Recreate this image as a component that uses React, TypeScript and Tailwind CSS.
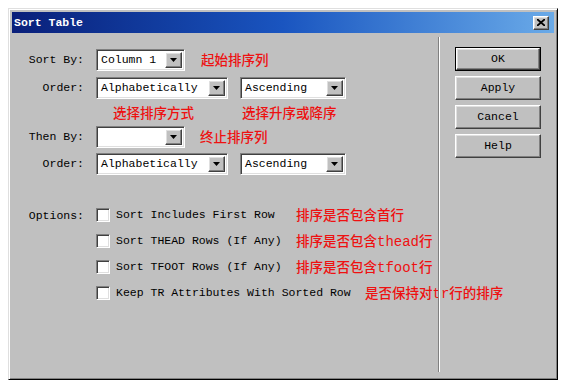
import React from "react";

const mono = "font-['Liberation_Mono','Noto_Sans_CJK_SC',monospace]";
const cjk = "font-['Noto_Sans_CJK_SC',sans-serif]";

const raised =
  "border border-t-white border-l-white border-r-[#404040] border-b-[#404040] shadow-[inset_-1px_-1px_0_#808080,inset_1px_1px_0_#dfdfdf] bg-[#c0c0c0]";
const sunken =
  "border border-t-[#808080] border-l-[#808080] border-r-white border-b-white shadow-[inset_1px_1px_0_#404040,inset_-1px_-1px_0_#dfdfdf]";

const Select = ({ value, w }: { value: string; w: string }) => (
  <div className={`${sunken} ${w} flex h-[22px] shrink-0 items-center bg-white p-[2px]`}>
    <span className={`${mono} flex-1 pl-[2px] text-[11.5px] leading-none text-black`}>
      {value}
    </span>
    <div className={`${raised} flex h-[16px] w-[17px] items-center justify-center`}>
      <svg width="7" height="4" viewBox="0 0 7 4">
        <path d="M0 0h7L3.5 4z" fill="#000" />
      </svg>
    </div>
  </div>
);

const Label = ({ children }: { children: React.ReactNode }) => (
  <div className={`${mono} w-[72px] shrink-0 text-right text-[11.5px] text-black`}>
    {children}
  </div>
);

const Red = ({ children, className = "" }: { children: React.ReactNode; className?: string }) => (
  <span
    className={`${cjk} shrink-0 whitespace-nowrap text-[13.5px] font-medium leading-none text-[#ee1111] ${className}`}
  >
    {children}
  </span>
);

const Check = ({ label, w, note }: { label: string; w: string; note: React.ReactNode }) => (
  <div className="flex h-[26px] items-center whitespace-nowrap">
    <div className="w-[84px] shrink-0" />
    <div className={`${sunken} h-[14px] w-[14px] shrink-0 bg-white`} />
    <span className={`${mono} ${w} shrink-0 pl-[6px] text-[11.5px] text-black`}>{label}</span>
    <Red>{note}</Red>
  </div>
);

const Btn = ({ children, def }: { children: string; def?: boolean }) => (
  <div className={def ? "border border-black" : ""}>
    <div
      className={`${raised} ${mono} flex items-center justify-center text-[11.5px] text-black ${
        def ? "h-[22px]" : "h-[24px]"
      }`}
    >
      {children}
    </div>
  </div>
);

const App = () => {
  return (
    <div className="h-[384px] w-[587px] bg-white pl-2 pt-2">
      <div className="flex h-[372px] w-[550px] flex-col border border-t-[#dfdfdf] border-l-[#dfdfdf] border-r-black border-b-black bg-[#c0c0c0] p-[3px] shadow-[inset_1px_1px_0_#fff,inset_-1px_-1px_0_#808080]">
        {/* Title bar */}
        <div className="flex h-[21px] items-center justify-between bg-gradient-to-r from-[#0a1f7a] via-[#1a55c0] to-[#6aaae8] pl-[2px] pr-[5px]">
          <span className={`${mono} text-[11.5px] font-bold text-white`}>Sort Table</span>
          <div className={`${raised} flex h-[14px] w-[16px] items-center justify-center`}>
            <svg width="8" height="7" viewBox="0 0 8 7">
              <path d="M0 0L8 7M8 0L0 7" stroke="#000" strokeWidth="1.8" />
            </svg>
          </div>
        </div>

        {/* Body */}
        <div className="flex flex-1">
          {/* Left */}
          <div className="w-[426px] shrink-0">
            <div className="mt-[16px] flex h-[22px] items-center gap-[12px]">
              <Label>Sort By:</Label>
              <Select value="Column 1" w="w-[89px]" />
              <Red className="ml-[4px]">起始排序列</Red>
            </div>
            <div className="mt-[6px] flex h-[22px] items-center gap-[12px]">
              <Label>Order:</Label>
              <Select value="Alphabetically" w="w-[132px]" />
              <Select value="Ascending" w="w-[106px]" />
            </div>
            <div className="flex h-[27px] items-center">
              <Red className="ml-[101px]">选择排序方式</Red>
              <Red className="ml-[48px]">选择升序或降序</Red>
            </div>
            <div className="flex h-[22px] items-center gap-[12px]">
              <Label>Then By:</Label>
              <Select value="" w="w-[89px]" />
              <Red className="ml-[3px]">终止排序列</Red>
            </div>
            <div className="mt-[5px] flex h-[22px] items-center gap-[12px]">
              <Label>Order:</Label>
              <Select value="Alphabetically" w="w-[132px]" />
              <Select value="Ascending" w="w-[106px]" />
            </div>

            <div className="mt-[27px]">
              <div className="relative">
                <div className="absolute left-[0px] top-[5px]">
                  <Label>Options:</Label>
                </div>
                <Check label="Sort Includes First Row" w="w-[186px]" note="排序是否包含首行" />
              </div>
              <Check
                label="Sort THEAD Rows (If Any)"
                w="w-[186px]"
                note={
                  <>
                    排序是否包含<span className={`${mono} text-[14px] font-normal`}>thead</span>行
                  </>
                }
              />
              <Check
                label="Sort TFOOT Rows (If Any)"
                w="w-[186px]"
                note={
                  <>
                    排序是否包含<span className={`${mono} text-[14px] font-normal`}>tfoot</span>行
                  </>
                }
              />
              <Check
                label="Keep TR Attributes With Sorted Row"
                w="w-[255px]"
                note={
                  <>
                    是否保持对<span className={`${mono} text-[14px] font-normal`}>tr</span>行的排序
                  </>
                }
              />
            </div>
          </div>

          {/* Separator */}
          <div className="mb-[4px] mt-[4px] flex shrink-0">
            <div className="w-px bg-[#808080]" />
            <div className="w-px bg-white" />
          </div>

          {/* Buttons */}
          <div className="ml-[15px] flex w-[86px] shrink-0 flex-col gap-[5px] pt-[14px]">
            <Btn def>OK</Btn>
            <Btn>Apply</Btn>
            <Btn>Cancel</Btn>
            <Btn>Help</Btn>
          </div>
        </div>
      </div>
    </div>
  );
};

export default App;
